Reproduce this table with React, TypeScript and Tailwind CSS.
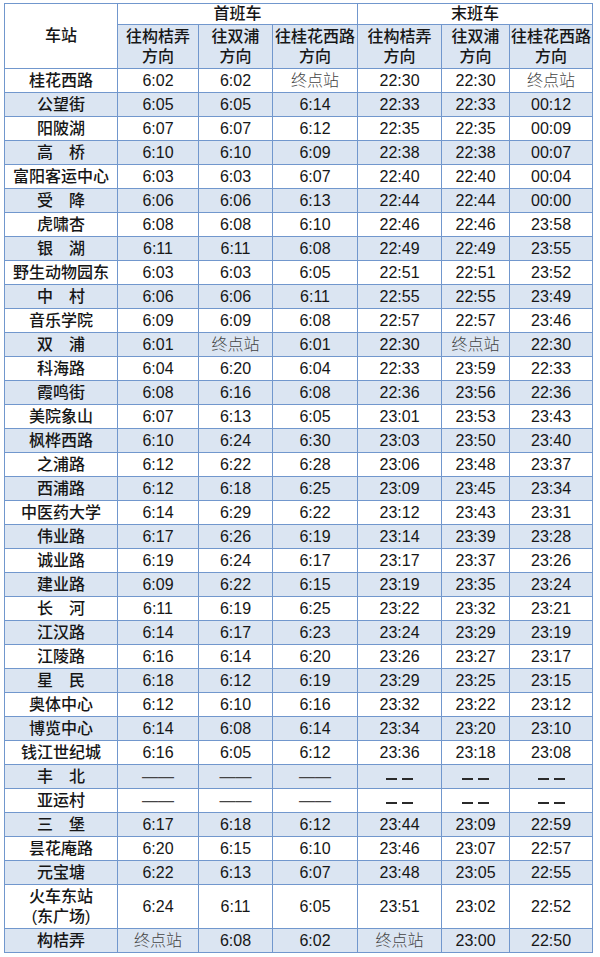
const STOP = '终点站';
const DASH = '——';
const DASH2 = '– –';

type Row = [string, string, string, string, string, string, string];

const rows: Row[] = [
  ['桂花西路', '6:02', '6:02', STOP, '22:30', '22:30', STOP],
  ['公望街', '6:05', '6:05', '6:14', '22:33', '22:33', '00:12'],
  ['阳陂湖', '6:07', '6:07', '6:12', '22:35', '22:35', '00:09'],
  ['高　桥', '6:10', '6:10', '6:09', '22:38', '22:38', '00:07'],
  ['富阳客运中心', '6:03', '6:03', '6:07', '22:40', '22:40', '00:04'],
  ['受　降', '6:06', '6:06', '6:13', '22:44', '22:44', '00:00'],
  ['虎啸杏', '6:08', '6:08', '6:10', '22:46', '22:46', '23:58'],
  ['银　湖', '6:11', '6:11', '6:08', '22:49', '22:49', '23:55'],
  ['野生动物园东', '6:03', '6:03', '6:05', '22:51', '22:51', '23:52'],
  ['中　村', '6:06', '6:06', '6:11', '22:55', '22:55', '23:49'],
  ['音乐学院', '6:09', '6:09', '6:08', '22:57', '22:57', '23:46'],
  ['双　浦', '6:01', STOP, '6:01', '22:30', STOP, '22:30'],
  ['科海路', '6:04', '6:20', '6:04', '22:33', '23:59', '22:33'],
  ['霞鸣街', '6:08', '6:16', '6:08', '22:36', '23:56', '22:36'],
  ['美院象山', '6:07', '6:13', '6:05', '23:01', '23:53', '23:43'],
  ['枫桦西路', '6:10', '6:24', '6:30', '23:03', '23:50', '23:40'],
  ['之浦路', '6:12', '6:22', '6:28', '23:06', '23:48', '23:37'],
  ['西浦路', '6:12', '6:18', '6:25', '23:09', '23:45', '23:34'],
  ['中医药大学', '6:14', '6:29', '6:22', '23:12', '23:43', '23:31'],
  ['伟业路', '6:17', '6:26', '6:19', '23:14', '23:39', '23:28'],
  ['诚业路', '6:19', '6:24', '6:17', '23:17', '23:37', '23:26'],
  ['建业路', '6:09', '6:22', '6:15', '23:19', '23:35', '23:24'],
  ['长　河', '6:11', '6:19', '6:25', '23:22', '23:32', '23:21'],
  ['江汉路', '6:14', '6:17', '6:23', '23:24', '23:29', '23:19'],
  ['江陵路', '6:16', '6:14', '6:20', '23:26', '23:27', '23:17'],
  ['星　民', '6:18', '6:12', '6:19', '23:29', '23:25', '23:15'],
  ['奥体中心', '6:12', '6:10', '6:16', '23:32', '23:22', '23:12'],
  ['博览中心', '6:14', '6:08', '6:14', '23:34', '23:20', '23:10'],
  ['钱江世纪城', '6:16', '6:05', '6:12', '23:36', '23:18', '23:08'],
  ['丰　北', DASH, DASH, DASH, DASH2, DASH2, DASH2],
  ['亚运村', DASH, DASH, DASH, DASH2, DASH2, DASH2],
  ['三　堡', '6:17', '6:18', '6:12', '23:44', '23:09', '22:59'],
  ['昙花庵路', '6:20', '6:15', '6:10', '23:46', '23:07', '22:57'],
  ['元宝塘', '6:22', '6:13', '6:07', '23:48', '23:05', '22:55'],
  ['火车东站\n(东广场)', '6:24', '6:11', '6:05', '23:51', '23:02', '22:52'],
  ['构桔弄', STOP, '6:08', '6:02', STOP, '23:00', '22:50'],
];

const dirs = ['往构桔弄', '往双浦', '往桂花西路', '往构桔弄', '往双浦', '往桂花西路'];

function Cell({ value }: { value: string }) {
  if (value === STOP) {
    return <td className="border border-[#7197cd] text-center font-light text-[#444]">{value}</td>;
  }
  if (value === DASH) {
    return <td className="border border-[#7197cd] text-center text-[#444]">{value}</td>;
  }
  if (value === DASH2) {
    // two short strokes, drawn a bit heavier than the long dash
    return (
      <td className="border border-[#7197cd]">
        <div className="flex justify-center gap-[5px] pt-[4px]">
          <span className="w-[11px] h-[2px] bg-[#2a2a2a]" />
          <span className="w-[11px] h-[2px] bg-[#2a2a2a]" />
        </div>
      </td>
    );
  }
  return <td className="border border-[#7197cd] text-center">{value}</td>;
}

export default function App() {
  return (
    <div className="bg-white w-[600px] h-[957px] pt-[3px] pl-[4px]">
      <table
        className="table-fixed border-collapse w-[588px] text-[16px] leading-[20px] text-[#161616]"
        style={{ fontFamily: '"Liberation Sans", "Noto Sans CJK SC", sans-serif' }}
      >
        <colgroup>
          <col className="w-[113px]" />
          <col className="w-[81px]" />
          <col className="w-[74px]" />
          <col className="w-[85px]" />
          <col className="w-[84px]" />
          <col className="w-[68px]" />
          <col className="w-[83px]" />
        </colgroup>
        <thead>
          <tr className="h-[21px]">
            <th rowSpan={2} className="border border-[#7197cd] font-medium bg-white">车站</th>
            <th colSpan={3} className="border border-[#7197cd] font-medium bg-white">首班车</th>
            <th colSpan={3} className="border border-[#7197cd] font-medium bg-white">末班车</th>
          </tr>
          <tr className="h-[44px] bg-[#dbe5f2]">
            {dirs.map((d, i) => (
              <th key={i} className="border border-[#7197cd] font-medium">
                {d}
                <br />
                方向
              </th>
            ))}
          </tr>
        </thead>
        <tbody>
          {rows.map((r, i) => (
            <tr
              key={i}
              className={`${r[0].includes('\n') ? 'h-[44px]' : 'h-[24px]'} ${i % 2 === 1 ? 'bg-[#dbe5f2]' : 'bg-white'}`}
            >
              <td className="border border-[#7197cd] text-center font-medium whitespace-pre-line">{r[0]}</td>
              {r.slice(1).map((v, j) => (
                <Cell key={j} value={v} />
              ))}
            </tr>
          ))}
        </tbody>
      </table>
    </div>
  );
}
